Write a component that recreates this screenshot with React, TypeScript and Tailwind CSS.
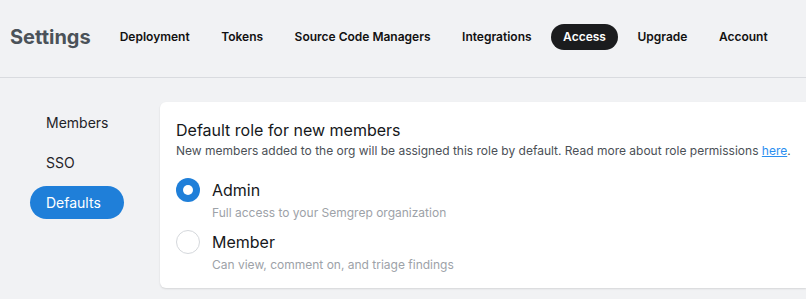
import React, { useState } from 'react';

const tabs = ['Deployment', 'Tokens', 'Source Code Managers', 'Integrations', 'Access', 'Upgrade', 'Account'];
const sideItems = ['Members', 'SSO', 'Defaults'];

const roles = [
  { id: 'admin', label: 'Admin', description: 'Full access to your Semgrep organization' },
  { id: 'member', label: 'Member', description: 'Can view, comment on, and triage findings' },
];

const App = () => {
  const [role, setRole] = useState('admin');

  return (
    <div className="min-h-screen overflow-hidden bg-[#f1f2f4] font-['Inter',sans-serif] text-[#111827]">
      {/* Top bar */}
      <header className="flex h-[78px] items-center whitespace-nowrap border-b border-[#d9dbdf] pb-1 pl-[10px]">
        <h1 className="mr-[17px] text-[20px] font-bold text-[#4b5259]">Settings</h1>
        <nav className="flex items-center gap-[7.5px]">
          {tabs.map((tab) => (
            <span
              key={tab}
              className={
                tab === 'Access'
                  ? 'flex h-[26px] items-center rounded-full bg-[#1b1c1e] px-3 text-[12px] font-semibold text-white'
                  : 'flex h-[26px] items-center px-3 text-[12px] font-semibold text-[#111111]'
              }
            >
              {tab}
            </span>
          ))}
        </nav>
      </header>

      <div className="flex">
        {/* Sidebar */}
        <aside className="flex w-[160px] shrink-0 flex-col gap-[7px] pl-[30px] pt-[28px]">
          {sideItems.map((item) => (
            <div
              key={item}
              className={
                item === 'Defaults'
                  ? 'flex h-[33px] w-[94px] items-center rounded-full bg-[#1f7fd9] px-4 text-[14px] text-white'
                  : 'flex h-[33px] w-[94px] items-center px-4 text-[14px] text-[#1f2328]'
              }
            >
              {item}
            </div>
          ))}
        </aside>

        {/* Content card */}
        <main className="min-w-0 flex-1 pt-[24px]">
          <div className="rounded-l-md bg-white px-4 pb-[14px] pt-4 shadow-[0_1px_2px_rgba(0,0,0,0.12)]">
            <h2 className="text-[16px] leading-6 text-[#16181b]">Default role for new members</h2>
            <p className="whitespace-nowrap text-[12px] leading-[18px] text-[#4b5056]">
              New members added to the org will be assigned this role by default. Read more about role permissions{' '}
              <a href="#" className="text-[#2b8ef0] underline">here</a>.
            </p>

            <div className="mt-[18px] flex flex-col gap-[8px]">
              {roles.map((r) => (
                <label key={r.id} className="flex cursor-pointer flex-col" onClick={() => setRole(r.id)}>
                  <div className="flex h-6 items-center gap-3">
                    {role === r.id ? (
                      <span className="flex h-6 w-6 items-center justify-center rounded-full bg-[#1f7fd9]">
                        <span className="h-[10px] w-[10px] rounded-full bg-white" />
                      </span>
                    ) : (
                      <span className="h-6 w-6 rounded-full border border-[#d5d8dc] bg-white" />
                    )}
                    <span className="text-[16px] text-[#16181b]">{r.label}</span>
                  </div>
                  <span className="ml-9 mt-[2px] text-[12px] leading-[18px] text-[#9da2a8]">{r.description}</span>
                </label>
              ))}
            </div>
          </div>
        </main>
      </div>
    </div>
  );
};

export default App;
